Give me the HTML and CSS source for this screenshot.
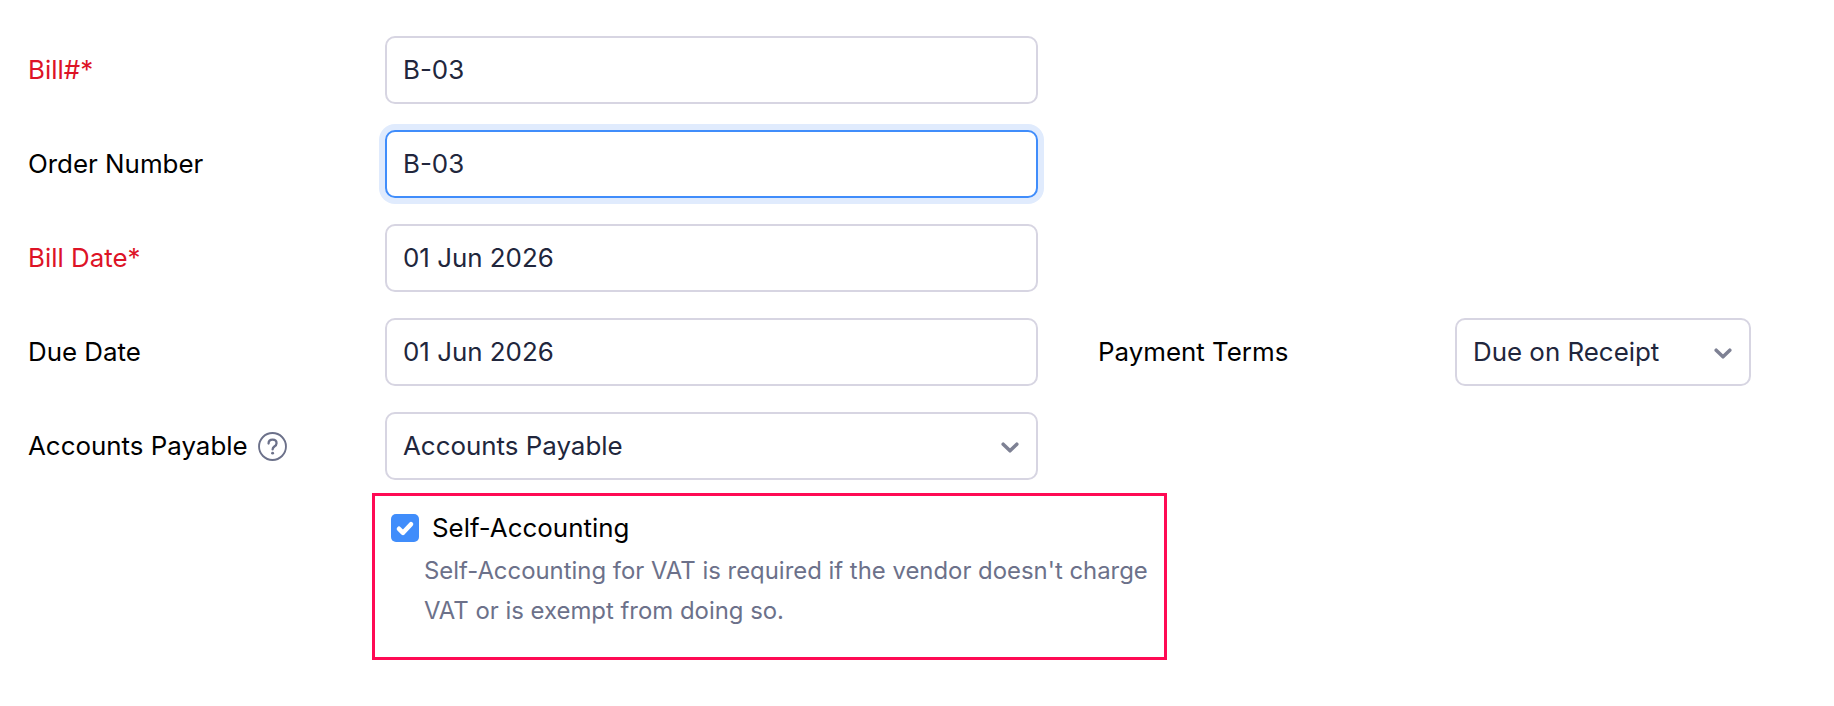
FILE: index.html
```html
<!DOCTYPE html>
<html>
<head>
    <title>New Bill</title>
    <link rel="stylesheet" href="styles.css">
</head>
<body>
    <form class="bill-form">
        <div class="row">
            <label class="label required" for="billNo">Bill#*</label>
            <input class="field" type="text" id="billNo" value="B-03">
        </div>
        <div class="row">
            <label class="label" for="orderNo">Order Number</label>
            <input class="field focused" type="text" id="orderNo" value="B-03">
        </div>
        <div class="row">
            <label class="label required" for="billDate">Bill Date*</label>
            <input class="field" type="text" id="billDate" value="01 Jun 2026">
        </div>
        <div class="row">
            <label class="label" for="dueDate">Due Date</label>
            <input class="field" type="text" id="dueDate" value="01 Jun 2026">
            <label class="label terms-label">Payment Terms</label>
            <div class="field select terms-select">
                <span>Due on Receipt</span>
                <svg class="chevron" viewBox="0 0 18 11"><path d="M2.2 2.2l6.8 6.6 6.8-6.6" fill="none" stroke="#7e8194" stroke-width="3.5" stroke-linecap="round" stroke-linejoin="round"/></svg>
            </div>
        </div>
        <div class="row">
            <label class="label">Accounts Payable
                <svg class="help" viewBox="0 0 28 28">
                    <circle cx="14" cy="14" r="13" fill="none" stroke="#6c718a" stroke-width="1.8"/>
                    <path d="M10.2 11.2c0-2.3 1.7-3.8 3.9-3.8s3.8 1.4 3.8 3.4c0 1.6-.9 2.4-2.1 3.2-1.1.8-1.7 1.4-1.7 2.8" fill="none" stroke="#6c718a" stroke-width="2.2" stroke-linecap="round"/>
                    <circle cx="14.1" cy="20.4" r="1.4" fill="#6c718a"/>
                </svg>
            </label>
            <div class="field select">
                <span>Accounts Payable</span>
                <svg class="chevron" viewBox="0 0 18 11"><path d="M2.2 2.2l6.8 6.6 6.8-6.6" fill="none" stroke="#7e8194" stroke-width="3.5" stroke-linecap="round" stroke-linejoin="round"/></svg>
            </div>
        </div>
        <div class="self-accounting">
            <div class="check-line">
                <span class="checkbox">
                    <svg viewBox="0 0 28 28"><path d="M8 14.8l4 4 8-8.6" fill="none" stroke="#fff" stroke-width="4.6" stroke-linecap="round" stroke-linejoin="round"/></svg>
                </span>
                <span class="check-text">Self-Accounting</span>
            </div>
            <p class="hint">Self-Accounting for VAT is required if the vendor doesn't charge VAT or is exempt from doing so.</p>
        </div>
    </form>
</body>
</html>
```
FILE: styles.css
```css
body {
    font-family: Inter, "Liberation Sans", sans-serif;
    margin: 0;
    padding: 0;
    background-color: white;
    color: #000;
}
.bill-form {
    padding: 36px 0 0 28px;
}
.row {
    display: flex;
    align-items: center;
    height: 68px;
    margin-bottom: 26px;
}
.label {
    width: 357px;
    flex: none;
    padding-bottom: 2px;
    font-size: 25.9px;
    display: flex;
    align-items: center;
    gap: 10px;
}
.required {
    color: #dd1326;
}
.field {
    box-sizing: border-box;
    width: 653px;
    height: 68px;
    flex: none;
    margin: 0;
    padding: 0 15px 2px 16px;
    font-family: inherit;
    font-size: 25.9px;
    color: #21263c;
    background-color: white;
    border: 2px solid #d7d5e2;
    border-radius: 10px;
    outline: none;
}
.focused {
    border-color: #408dfb;
    box-shadow: 0 0 0 6px #e0ebfd;
}
.select {
    display: flex;
    align-items: center;
    justify-content: space-between;
}
.chevron {
    width: 18px;
    height: 11px;
    margin: 5px 2px 0 0;
}
.terms-label {
    width: 356px;
    margin-left: 60px;
    margin-right: 1px;
}
.terms-select {
    width: 296px;
}
.help {
    width: 29px;
    height: 29px;
    margin-top: 3px;
}
.self-accounting {
    box-sizing: border-box;
    width: 795px;
    height: 167px;
    margin: -13px 0 0 344px;
    padding: 16px 16px 0 16px;
    border: 3px solid #ff0a54;
}
.check-line {
    display: flex;
    align-items: center;
    gap: 13px;
}
.checkbox {
    width: 28px;
    height: 28px;
    background-color: #408dfb;
    border-radius: 5px;
}
.checkbox svg {
    display: block;
}
.check-text {
    font-size: 25.9px;
}
.hint {
    margin: 8px 0 0 33px;
    font-size: 23.9px;
    line-height: 40px;
    color: #6c718a;
}
```
